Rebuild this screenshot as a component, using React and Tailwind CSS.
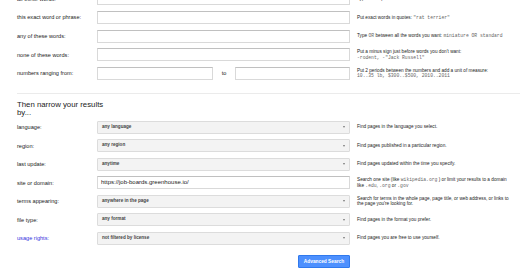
import React from "react";

const topRows = [
  {
    label: "all these words:",
    desc: [["Type the important words: ", "tricolor rat terrier"]],
  },
  {
    label: "this exact word or phrase:",
    desc: [["Put exact words in quotes: ", "\"rat terrier\""]],
  },
  {
    label: "any of these words:",
    desc: [["Type ", "OR", " between all the words you want: ", "miniature OR standard"]],
  },
  {
    label: "none of these words:",
    desc: [
      ["Put a minus sign just before words you don't want:"],
      ["", "-rodent, -\"Jack Russell\""],
    ],
  },
];

const narrowRows = [
  { label: "language:", value: "any language", desc: [["Find pages in the language you select."]] },
  { label: "region:", value: "any region", desc: [["Find pages published in a particular region."]] },
  { label: "last update:", value: "anytime", desc: [["Find pages updated within the time you specify."]] },
  {
    label: "site or domain:",
    input: "https://job-boards.greenhouse.io/",
    desc: [
      ["Search one site (like ", "wikipedia.org", " ) or limit your results to a domain"],
      ["like ", ".edu", ", ", ".org", " or ", ".gov"],
    ],
  },
  {
    label: "terms appearing:",
    value: "anywhere in the page",
    desc: [
      ["Search for terms in the whole page, page title, or web address, or links to"],
      ["the page you're looking for."],
    ],
  },
  { label: "file type:", value: "any format", desc: [["Find pages in the format you prefer."]] },
  {
    label: "usage rights:",
    value: "not filtered by license",
    link: true,
    desc: [["Find pages you are free to use yourself."]],
  },
];

// every odd piece of a line is monospace
function Desc({ lines }) {
  return (
    <div className="ml-[7px] text-[4.7px] leading-[5.6px] text-[#222] whitespace-nowrap">
      {lines.map((line, i) => (
        <div key={i}>
          {line.map((part, j) =>
            j % 2 === 1 ? (
              <span key={j} className="font-['Liberation_Mono',monospace] text-[#666]">
                {part}
              </span>
            ) : (
              <span key={j}>{part}</span>
            )
          )}
        </div>
      ))}
    </div>
  );
}

function TextBox({ className = "w-[253px]", value }) {
  return (
    <div
      className={`${className} h-[13px] bg-white border border-[#d9d9d9] border-t-[#c0c0c0] flex items-center pl-[3px] text-[6px] text-[#222]`}
    >
      {value}
    </div>
  );
}

function Select({ value }) {
  return (
    <div className="w-[253px] h-[13px] bg-[#f3f3f3] border border-[#dcdcdc] rounded-[1px] flex items-center justify-between pl-[4px] pr-[4px]">
      <span className="text-[4.6px] font-bold text-[#444]">{value}</span>
      <span className="w-0 h-0 border-l-[1.6px] border-r-[1.6px] border-t-[2px] border-l-transparent border-r-transparent border-t-[#777]" />
    </div>
  );
}

export default function App() {
  return (
    <div className="w-[520px] h-[272px] overflow-hidden bg-white font-['Liberation_Sans',Arial,sans-serif]">
      <div className="mt-[-10.5px] pl-[17px]">
        {topRows.map((row) => (
          <div key={row.label} className="flex items-center h-[18.67px]">
            <div className="w-[80px] text-[5.6px] text-[#222]">{row.label}</div>
            <TextBox />
            <Desc lines={row.desc} />
          </div>
        ))}
        <div className="flex items-center h-[18.67px]">
          <div className="w-[80px] text-[5.6px] text-[#222]">numbers ranging from:</div>
          <TextBox className="w-[116px]" />
          <div className="w-[22px] text-center text-[5.6px] text-[#222]">to</div>
          <TextBox className="w-[115px]" />
          <Desc
            lines={[
              ["Put 2 periods between the numbers and add a unit of measure:"],
              ["", "10..35 lb, $300..$500, 2010..2011"],
            ]}
          />
        </div>

        <div className="mt-[10px] h-px bg-[#ebebeb]" />

        <div className="mt-[7px] w-[90px] text-[7.8px] leading-[8px] text-[#222]">
          Then narrow your results by...
        </div>

        <div className="mt-[1.2px]">
          {narrowRows.map((row) => (
            <div key={row.label} className="flex items-center h-[18.5px]">
              <div
                className={`w-[80px] text-[5.6px] ${row.link ? "text-[#3333dd]" : "text-[#222]"}`}
              >
                {row.label}
              </div>
              {row.input ? <TextBox value={row.input} /> : <Select value={row.value} />}
              <Desc lines={row.desc} />
            </div>
          ))}
        </div>

        <div className="mt-[7.5px] flex">
          <div className="w-[80px]" />
          <div className="w-[253px] flex justify-end">
            <button className="w-[52px] h-[13px] bg-[#4d90fe] border border-[#3079ed] rounded-[1px] text-white text-[4.8px] font-bold">
              Advanced Search
            </button>
          </div>
        </div>
      </div>
    </div>
  );
}
